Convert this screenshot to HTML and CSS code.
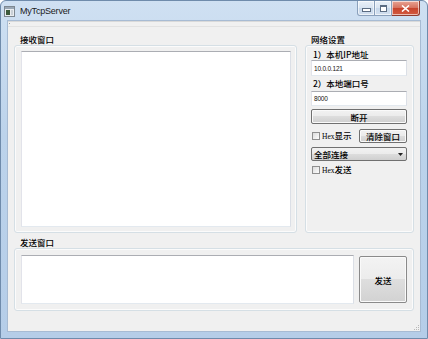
FILE: index.html
```html
<!DOCTYPE html>
<html lang="zh">
  <head>
    <meta charset="UTF-8" />
    <meta name="viewport" content="width=device-width, initial-scale=1.0" />
    <title>MyTcpServer</title>
    <link rel="stylesheet" href="styles.css">
  </head>
  <body>
    <div class="window">
      <div class="titlebar">
        <svg class="appicon" width="11" height="11" viewBox="0 0 11 11">
          <rect x="0.5" y="0.5" width="10" height="10" fill="#e9ecef" stroke="#7d8790" />
          <rect x="1" y="1" width="9" height="2" fill="#9aa7b4" />
          <rect x="2" y="4" width="4" height="5" fill="#3d5a3c" />
          <rect x="7" y="4" width="2" height="5" fill="#c9d0d6" />
        </svg>
        <span class="title">MyTcpServer</span>
        <div class="caption">
          <div class="cbtn min"><span class="glyph-min"></span></div>
          <div class="cbtn max"><span class="glyph-max"></span></div>
          <div class="cbtn close">
            <svg width="9" height="7" viewBox="0 0 9 7">
              <path d="M1 0.5 L8 6.5 M8 0.5 L1 6.5" stroke="#fff" stroke-width="1.6" />
            </svg>
          </div>
        </div>
      </div>

      <div class="client">
        <div class="toolbar"><span class="handle"></span></div>

        <div class="central">
          <div class="toprow">
            <div class="group recv">
              <div class="gtitle">接收窗口</div>
              <div class="gframe">
                <div class="textedit"></div>
              </div>
            </div>

            <div class="group net">
              <div class="gtitle">网络设置</div>
              <div class="gframe netframe">
                <div class="label first">1）本机IP地址</div>
                <div class="lineedit tall"><span class="small">10.0.0.121</span></div>
                <div class="label">2）本地端口号</div>
                <div class="lineedit"><span class="small">8000</span></div>
                <div class="btn wide">断开</div>
                <div class="row">
                  <span class="check"></span>
                  <span class="ctext"><span class="hex">Hex</span>显示</span>
                  <div class="btn clear">清除窗口</div>
                </div>
                <div class="combo">
                  <span>全部连接</span>
                  <svg width="5" height="3" viewBox="0 0 5 3"><path d="M0 0 H5 L2.5 3 Z" fill="#222" /></svg>
                </div>
                <div class="row checkrow">
                  <span class="check"></span>
                  <span class="ctext"><span class="hex">Hex</span>发送</span>
                </div>
              </div>
            </div>
          </div>

          <div class="group send">
            <div class="gtitle">发送窗口</div>
            <div class="gframe sendframe">
              <div class="textedit"></div>
              <div class="btn sendbtn">发送</div>
            </div>
          </div>
        </div>

        <div class="statusbar">
          <svg class="grip" width="7" height="7" viewBox="0 0 7 7">
            <g fill="#b8b8b8">
              <rect x="5" y="1" width="1" height="1" />
              <rect x="3" y="3" width="1" height="1" />
              <rect x="5" y="3" width="1" height="1" />
              <rect x="1" y="5" width="1" height="1" />
              <rect x="3" y="5" width="1" height="1" />
              <rect x="5" y="5" width="1" height="1" />
            </g>
          </svg>
        </div>
      </div>
    </div>
  </body>
</html>
```

FILE: styles.css
```css
body {
  margin: 0;
  background: #fff;
}
.window {
  width: 428px;
  height: 339px;
  box-sizing: border-box;
  display: flex;
  flex-direction: column;
  padding: 0 7px 7px;
  border: 1px solid #6f8bab;
  border-radius: 6px 6px 0 0;
  background: linear-gradient(#cfe0f2, #bcd3eb 40%, #b5cde8);
  font-family: "Noto Sans CJK SC", sans-serif;
  font-weight: 500;
  color: #000;
}

/* title bar */
.titlebar {
  height: 20px;
  margin: 0 -7px;
  padding: 0 7px 0 3px;
  display: flex;
  align-items: center;
}
.appicon {
  margin-right: 5px;
}
.title {
  font-family: "Liberation Sans", Arial, sans-serif;
  font-weight: 400;
  font-size: 9px;
  color: #1b1b1b;
  letter-spacing: -0.2px;
}
.caption {
  margin-left: auto;
  align-self: flex-start;
  display: flex;
}
.cbtn {
  height: 15px;
  box-sizing: border-box;
  border: 1px solid #8aa0bb;
  border-top: none;
  display: flex;
  align-items: center;
  justify-content: center;
  background: linear-gradient(#e9f0f8, #d8e4f1 50%, #c6d7ea 50%, #d3e0ef);
  box-shadow: inset 0 0 0 1px rgba(255, 255, 255, 0.6);
}
.cbtn.min {
  width: 18px;
  border-radius: 0 0 0 3px;
}
.cbtn.max {
  width: 17px;
  border-left: none;
}
.cbtn.close {
  width: 28px;
  border-color: #8e3c30;
  border-left: none;
  border-radius: 0 0 3px 0;
  background: linear-gradient(#e8a595, #d6705d 50%, #c7432c 50%, #d25a3f);
}
.glyph-min {
  width: 7px;
  height: 2px;
  margin-top: 4px;
  background: #fff;
  border: 1px solid #5b6c82;
}
.glyph-max {
  width: 5px;
  height: 4px;
  border: 1px solid #5b6c82;
  border-top-width: 2px;
  background: #fff;
}

/* client area */
.client {
  flex: 1;
  display: flex;
  flex-direction: column;
  background: #f0f0f0;
  box-shadow: 0 0 0 1px #a7bbd3;
}
.toolbar {
  height: 6px;
  box-sizing: border-box;
  border-top: 1px solid #d9d9d9;
  border-bottom: 1px solid #e2e2e2;
  padding: 1px 0 0 1px;
}
.handle {
  display: block;
  width: 1px;
  height: 1px;
  background: #9a9a9a;
}
.central {
  flex: 1;
  display: flex;
  flex-direction: column;
  padding: 7px 6px 6px;
  gap: 4px;
}
.toprow {
  height: 199px;
  display: flex;
  gap: 8px;
}
.group {
  display: flex;
  flex-direction: column;
}
.group.recv {
  width: 283px;
}
.group.net {
  width: 109px;
}
.group.send {
  flex: 1;
}
.gtitle {
  height: 11px;
  line-height: 11px;
  padding-left: 6px;
  font-size: 8.5px;
}
.gframe {
  flex: 1;
  display: flex;
  border: 1px solid #d5dfe5;
  border-radius: 3px;
  box-shadow: inset 0 0 0 1px #fbfbfb;
  padding: 5px 5px 5px 6px;
}
.textedit {
  flex: 1;
  background: #fff;
  border: 1px solid;
  border-color: #abadb3 #dbdfe6 #e3e9ef #e2e3ea;
}

/* network settings */
.netframe {
  flex-direction: column;
  padding: 0 6px 0 5px;
}
.label {
  height: 10px;
  line-height: 10px;
  font-size: 8.5px;
  margin-top: 2px;
  padding-left: 2px;
}
.label.first {
  margin-top: 3px;
}
.lineedit {
  height: 15px;
  margin-top: 3px;
  box-sizing: border-box;
  background: #fff;
  border: 1px solid;
  border-color: #abadb3 #dbdfe6 #e3e9ef #e2e3ea;
  display: flex;
  align-items: center;
  padding-left: 2px;
}
.lineedit.tall {
  height: 16px;
  margin-top: 1px;
}
.small {
  font-family: "Liberation Sans", Arial, sans-serif;
  font-weight: 400;
  font-size: 6.5px;
  letter-spacing: -0.2px;
  color: #111;
}
.btn {
  box-sizing: border-box;
  display: flex;
  align-items: center;
  justify-content: center;
  font-size: 8.5px;
  border: 1px solid #707070;
  border-radius: 2px;
  background: linear-gradient(#f2f2f2, #ebebeb 50%, #dddddd 50%, #cfcfcf);
  box-shadow: inset 0 0 0 1px #fafafa;
}
.btn.wide {
  height: 15px;
  margin-top: 3px;
}
.row {
  height: 15px;
  margin-top: 4px;
  display: flex;
  align-items: center;
}
.check {
  width: 8px;
  height: 8px;
  margin-left: 1px;
  box-sizing: border-box;
  border: 1px solid #8f8f8f;
  background: linear-gradient(135deg, #dcdcdc, #fdfdfd);
}
.ctext {
  margin-left: 2px;
  font-size: 8.5px;
  line-height: 10px;
}
.hex {
  font-family: "Liberation Serif", serif;
  font-weight: 400;
  font-size: 7.5px;
}
.btn.clear {
  margin-left: auto;
  width: 48px;
  height: 14px;
}
.combo {
  height: 14px;
  margin-top: 4px;
  box-sizing: border-box;
  display: flex;
  align-items: center;
  justify-content: space-between;
  padding: 0 3px 0 2px;
  font-size: 8.5px;
  border: 1px solid #707070;
  border-radius: 2px;
  background: linear-gradient(#f2f2f2, #ebebeb 50%, #dddddd 50%, #cfcfcf);
}
.checkrow {
  height: 10px;
}

/* send group */
.sendframe {
  align-items: center;
  gap: 5px;
  padding: 6px;
}
.sendframe .textedit {
  align-self: stretch;
}
.btn.sendbtn {
  width: 48px;
  height: 47px;
  background: linear-gradient(#f3f3f3, #ececec 50%, #dedede 50%, #d2d2d2);
  border-color: #8a8a8a;
}

.statusbar {
  height: 14px;
  display: flex;
  justify-content: flex-end;
  align-items: flex-end;
}
```
